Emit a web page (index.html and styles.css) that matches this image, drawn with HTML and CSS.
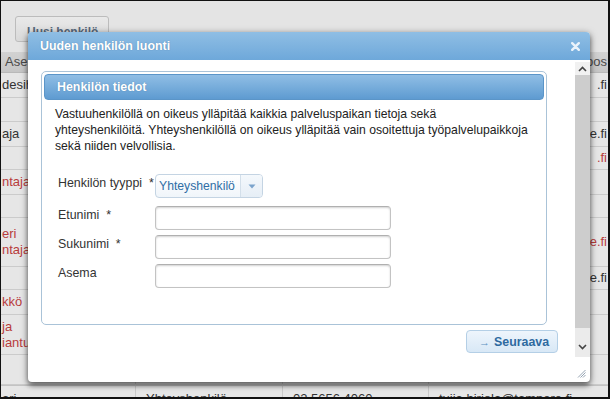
FILE: index.html
```html
<!DOCTYPE html>
<html lang="fi">
<head>
<meta charset="utf-8">
<title>Uuden henkilön luonti</title>
<link rel="stylesheet" href="styles.css">
</head>
<body>
<div class="screen">
  <div class="topbar"><div class="btn-bg">Uusi henkilö</div></div>
  <div class="table">
    <div class="row head"><div class="c c1 hd">Ase</div><div class="c c2"></div><div class="c c3"></div><div class="c c4 r hd">pos</div></div>
    <div class="row h25"><div class="c c1">desih</div><div class="c c2"></div><div class="c c3"></div><div class="c c4 r">.fi</div></div>
    <div class="row h24"><div class="c c1"></div><div class="c c2"></div><div class="c c3"></div><div class="c c4 r"></div></div>
    <div class="row h25"><div class="c c1">aja</div><div class="c c2"></div><div class="c c3"></div><div class="c c4 r">e.fi</div></div>
    <div class="row h23"><div class="c c1"></div><div class="c c2"></div><div class="c c3"></div><div class="c c4 r red">.fi</div></div>
    <div class="row h25"><div class="c c1 red">ntaja</div><div class="c c2"></div><div class="c c3"></div><div class="c c4 r"></div></div>
    <div class="row h23"><div class="c c1"></div><div class="c c2"></div><div class="c c3"></div><div class="c c4 r"></div></div>
    <div class="row h49"><div class="c c1 red stack"><span>eri</span><span>ntaja</span></div><div class="c c2"></div><div class="c c3"></div><div class="c c4 r red">re.fi</div></div>
    <div class="row h23"><div class="c c1"></div><div class="c c2"></div><div class="c c3"></div><div class="c c4 r">e.fi</div></div>
    <div class="row h25"><div class="c c1 red">kkö</div><div class="c c2"></div><div class="c c3"></div><div class="c c4 r"></div></div>
    <div class="row h40"><div class="c c1 red stack"><span>ja</span><span>iantu</span></div><div class="c c2"></div><div class="c c3"></div><div class="c c4 r"></div></div>
    <div class="row h30"><div class="c c1"></div><div class="c c2"></div><div class="c c3"></div><div class="c c4 r"></div></div>
    <div class="row h25 top"><div class="c c1">ari</div><div class="c c2 pad">Yhteyshenkilö</div><div class="c c3 pad">02 5656 4060</div><div class="c c4 pad">tuija.hirjola@tampere.fi</div></div>
  </div>

  <div class="dialog">
    <div class="titlebar">
      <span class="title">Uuden henkilön luonti</span>
      <svg class="close" width="9" height="9" viewBox="0 0 9 9"><path d="M1.2 1.2 L7.8 7.8 M7.8 1.2 L1.2 7.8" stroke="#eaf3fb" stroke-width="2.4" stroke-linecap="round"/></svg>
    </div>
    <div class="dbody">
      <div class="content">
        <div class="panel">
          <div class="phead">Henkilön tiedot</div>
          <p class="intro">Vastuuhenkilöllä on oikeus ylläpitää kaikkia palveluspaikan tietoja sekä<br>yhteyshenkilöitä. Yhteyshenkilöllä on oikeus ylläpitää vain osoitettuja työpalvelupaikkoja<br>sekä niiden velvollisia.</p>
          <div class="form">
            <div class="frow">
              <label class="lbl">Henkilön tyyppi &nbsp;*</label>
              <div class="select">
                <span class="sel-text">Yhteyshenkilö</span>
                <span class="sel-btn"><svg width="8" height="5" viewBox="0 0 8 5"><path d="M0.5 0.5 L7.5 0.5 L4 4.5 Z" fill="#7ba3cc"/></svg></span>
              </div>
            </div>
            <div class="frow gap8">
              <label class="lbl">Etunimi &nbsp;*</label>
              <div class="input"></div>
            </div>
            <div class="frow gap5">
              <label class="lbl">Sukunimi &nbsp;*</label>
              <div class="input"></div>
            </div>
            <div class="frow gap5">
              <label class="lbl">Asema</label>
              <div class="input"></div>
            </div>
          </div>
        </div>
        <div class="actions">
          <div class="btn-next"><span class="arrow">&#8594;</span><span>Seuraava</span></div>
        </div>
      </div>
      <div class="side">
        <div class="sbar">
          <div class="sb-up"><svg width="9" height="6" viewBox="0 0 9 6"><path d="M1 5 L4.5 1.5 L8 5" fill="none" stroke="#444" stroke-width="1.6"/></svg></div>
          <div class="sb-thumb"></div>
          <div class="sb-track"><svg width="9" height="6" viewBox="0 0 9 6"><path d="M1 1 L4.5 4.5 L8 1" fill="none" stroke="#444" stroke-width="1.6"/></svg></div>
        </div>
        <div class="grip"><svg width="9" height="9" viewBox="0 0 9 9"><path d="M8.5 1 L1 8.5 M8.5 3.5 L3.5 8.5 M8.5 6 L6 8.5" stroke="#8a9aaa" stroke-width="0.9"/></svg></div>
      </div>
    </div>
  </div>
</div>
</body>
</html>
```
FILE: styles.css
```css
* { box-sizing: border-box; }
html, body { margin: 0; padding: 0; }
body { font-family: "Liberation Sans", Arial, sans-serif; font-size: 12px; color: #222; background: #e4e4e4; }

.screen {
  position: relative;
  width: 610px;
  height: 399px;
  overflow: hidden;
  background: #e4e4e4;
  border-top: 1px solid #111;
  border-left: 1px solid #111;
  border-right: 2px solid #111;
  border-bottom: 2px solid #111;
}

.topbar { height: 51px; padding: 15px 0 0 14px; }
.btn-bg {
  width: 94px;
  height: 26px;
  border: 1px solid #bcbcbc;
  border-radius: 3px;
  background: linear-gradient(#e9e9e9, #d9d9d9);
  color: #56687c;
  font-weight: bold;
  font-size: 12px;
  padding: 8px 0 0 11px;
}

.table { display: flex; flex-direction: column; }
.row {
  display: grid;
  grid-template-columns: 135px 147px 146px 1fr;
  border-bottom: 1px solid #cbcbcb;
  background: #e6e6e6;
}
.row.head { height: 21px; background: linear-gradient(#d2d2d2, #c6c6c6); border-bottom: 1px solid #b9b9b9; }
.row.top { border-top: 1px solid #c3c3c3; }
.h23 { height: 23px; }
.h24 { height: 24px; }
.h25 { height: 25px; }
.h30 { height: 30px; }
.h40 { height: 40px; }
.h49 { height: 49px; }
.c {
  display: flex;
  align-items: center;
  border-right: 1px solid #cbcbcb;
  color: #333;
  font-size: 13px;
  line-height: 16px;
  white-space: nowrap;
  overflow: hidden;
  padding-left: 1px;
}
.c4 { border-right: 0; }
.c.r { justify-content: flex-end; padding-right: 1px; }
.c.hd { color: #4a4a4a; padding-left: 4px; }
.c4.hd { padding-left: 0; }
.c.pad { padding-left: 10px; align-items: flex-start; padding-top: 5px; }
.row.top .c1 { align-items: flex-start; padding-top: 5px; }
.stack { flex-direction: column; align-items: flex-start; justify-content: center; }
.c.red { color: #b83c3c; }

/* dialog */
.dialog {
  position: absolute;
  left: 27px;
  top: 31px;
  width: 562px;
  height: 350px;
  display: flex;
  flex-direction: column;
  background: #fff;
  border-radius: 4px;
  box-shadow: 0 2px 7px rgba(0, 0, 0, 0.55), 0 4px 4px rgba(0, 0, 0, 0.25);
}
.titlebar {
  height: 28px;
  flex: none;
  display: flex;
  align-items: center;
  justify-content: space-between;
  padding: 0 10px 0 12px;
  background: linear-gradient(#8fbee4, #6ea8da);
  border-radius: 4px 4px 0 0;
}
.title { color: #fff; font-weight: bold; font-size: 12.4px; text-shadow: 0 0 1px rgba(40, 80, 120, 0.5); }
.close { display: block; }

.dbody { flex: 1; display: flex; min-height: 0; }
.content { flex: 1; padding: 11px 0 0 13px; display: flex; flex-direction: column; }
.panel {
  width: 506px;
  height: 254px;
  border: 1px solid #aac3d8;
  border-radius: 5px;
  padding: 2px;
}
.phead {
  height: 26px;
  border: 1px solid #5b95c8;
  border-radius: 4px;
  background: linear-gradient(#90bee5, #5e9bd1);
  color: #fff;
  font-weight: bold;
  font-size: 12.4px;
  padding-left: 12px;
  display: flex;
  align-items: center;
  text-shadow: 0 0 1px rgba(40, 80, 120, 0.5);
}
.intro {
  margin: 6px 0 0 11px;
  width: 490px;
  line-height: 16px;
  color: #222;
  font-size: 12.2px;
  white-space: nowrap;
}
.form { margin: 20px 0 0 14px; display: flex; flex-direction: column; }
.frow { display: flex; align-items: flex-start; }
.gap8 { margin-top: 8px; }
.gap5 { margin-top: 5px; }
.lbl { width: 97px; line-height: 16px; padding-top: 1px; color: #333; font-size: 12.4px; }
.input {
  width: 236px;
  height: 24px;
  border: 1px solid #c3c3c3;
  border-top-color: #b0b0b0;
  border-radius: 4px;
  background: #fff;
  box-shadow: inset 0 1px 2px rgba(0, 0, 0, 0.18);
}
.select {
  width: 108px;
  height: 24px;
  display: flex;
  border: 1px solid #c4d4e3;
  border-radius: 4px;
  background: linear-gradient(#ffffff, #f0f5fa);
}
.sel-text { flex: 1; color: #2f6ea5; padding-left: 3px; line-height: 22px; font-size: 12.2px; white-space: nowrap; }
.sel-btn {
  width: 22px;
  border-left: 1px solid #d3dfea;
  display: flex;
  align-items: center;
  justify-content: center;
  background: linear-gradient(#f4f8fc, #e6eef6);
  border-radius: 0 3px 3px 0;
}
.sel-btn svg { display: block; margin-top: 1px; }

.actions { display: flex; justify-content: flex-end; padding-right: 17px; margin-top: 5px; }
.btn-next {
  height: 23px;
  width: 92px;
  display: flex;
  align-items: center;
  padding-left: 12px;
  border: 1px solid #b4cfe6;
  border-radius: 4px;
  background: linear-gradient(#eef5fc, #d8e8f6);
  color: #2e6aa0;
  font-weight: bold;
  font-size: 12.4px;
}
.arrow { font-weight: normal; font-size: 11px; color: #5b8fc0; width: 15px; }

.side { width: 15px; flex: none; display: flex; flex-direction: column; }
.sbar { margin-top: 2px; height: 295px; display: flex; flex-direction: column; }
.sb-up { height: 13px; background: #f1f1f1; display: flex; align-items: center; justify-content: center; }
.sb-up svg, .sb-track svg { display: block; }
.sb-thumb { height: 253px; background: #cdcdcd; }
.sb-track { flex: 1; background: #ebebeb; display: flex; align-items: flex-end; justify-content: center; padding-bottom: 7px; }
.grip { margin-top: auto; height: 16px; display: flex; justify-content: flex-end; padding: 3px 4px 0 0; }
.grip svg { display: block; }
```
